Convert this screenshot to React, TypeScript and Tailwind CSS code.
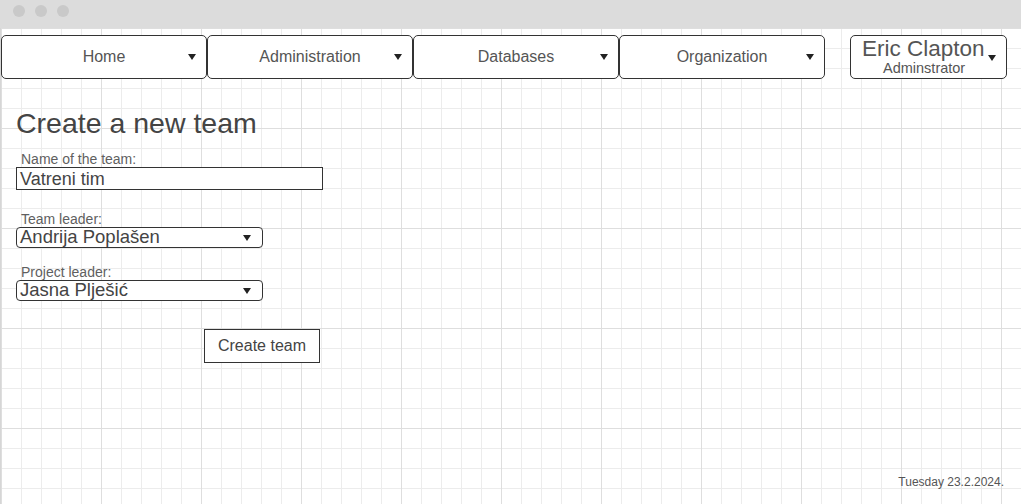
import { ReactNode } from 'react';

function Caret({ className = '' }: { className?: string }) {
  return (
    <svg width="8" height="6" viewBox="0 0 8 6" className={className}>
      <path d="M0 0 L8 0 L4 6 Z" fill="#222" />
    </svg>
  );
}

function NavTab({ label }: { label: string }) {
  return (
    <div className="relative flex h-[44px] w-[206px] items-center justify-center rounded-[5px] border border-[#333] bg-white">
      <span className="text-[16px] text-[#555]">{label}</span>
      <Caret className="absolute right-[10px] top-[18px]" />
    </div>
  );
}

function Field({ label, children }: { label: string; children: ReactNode }) {
  return (
    <div className="flex flex-col">
      <span className="pl-[5px] text-[14px] leading-[15px] text-[#5f5f5f]">{label}</span>
      {children}
    </div>
  );
}

function Select({ value }: { value: string }) {
  return (
    <div className="relative flex h-[21px] w-[247px] items-center rounded-[4px] border border-[#333] bg-white pl-[3px]">
      <span className="text-[18.5px] leading-none text-[#444]">{value}</span>
      <Caret className="absolute right-[11px] top-[7px]" />
    </div>
  );
}

export default function App() {
  return (
    <div className="flex h-[504px] w-[1021px] flex-col overflow-hidden bg-white font-['Liberation_Sans',Arial,sans-serif]">
      {/* window chrome */}
      <div className="flex h-[28px] shrink-0 items-start gap-[10px] bg-[#dcdcdc] pl-[13px] pt-[5px]">
        <span className="h-[12px] w-[12px] rounded-full bg-[#c9c9c9]" />
        <span className="h-[12px] w-[12px] rounded-full bg-[#c9c9c9]" />
        <span className="h-[12px] w-[12px] rounded-full bg-[#c9c9c9]" />
      </div>

      <div className="relative flex flex-1 flex-col border-l border-[#d6d6d6] bg-[linear-gradient(to_right,#dedede_1px,transparent_1px),linear-gradient(to_bottom,#dedede_1px,transparent_1px),linear-gradient(to_right,#ececec_1px,transparent_1px),linear-gradient(to_bottom,#ececec_1px,transparent_1px)] bg-size-[100px_100px,100px_100px,20px_20px,20px_20px] bg-position-[0px_0px]">
        {/* nav */}
        <div className="mt-[7px] flex items-start">
          <div className="flex">
            <NavTab label="Home" />
            <NavTab label="Administration" />
            <NavTab label="Databases" />
            <NavTab label="Organization" />
          </div>
          <div className="relative ml-[25px] flex h-[44px] w-[157px] flex-col items-start rounded-[5px] border border-[#333] bg-white pl-[11px] pt-[1px]">
            <span className="text-[22.5px] leading-[24px] text-[#555]">Eric Clapton</span>
            <span className="ml-[21px] text-[14.5px] leading-[15px] text-[#555]">Adminstrator</span>
            <Caret className="absolute right-[10px] top-[19px]" />
          </div>
        </div>

        {/* form */}
        <div className="flex flex-col pl-[15px]">
          <h1 className="mt-[28px] text-[28.5px] leading-[32px] text-[#444]">Create a new team</h1>

          <div className="mt-[13px]">
            <Field label="Name of the team:">
              <div className="flex h-[23px] w-[307px] items-center border border-[#333] bg-white pl-[3px]">
                <span className="text-[18px] leading-none text-[#444]">Vatreni tim</span>
              </div>
            </Field>
          </div>

          <div className="mt-[22px]">
            <Field label="Team leader:">
              <Select value="Andrija Poplašen" />
            </Field>
          </div>

          <div className="mt-[17px]">
            <Field label="Project leader:">
              <Select value="Jasna Plješić" />
            </Field>
          </div>

          <div className="ml-[188px] mt-[28px]">
            <button className="flex h-[34px] w-[116px] items-center justify-center border border-[#333] bg-white text-[16px] text-[#444]">
              Create team
            </button>
          </div>
        </div>

        <div className="mt-auto flex justify-end pb-[13px] pr-[17px]">
          <span className="text-[12px] text-[#555]">Tuesday 23.2.2024.</span>
        </div>
      </div>
    </div>
  );
}
